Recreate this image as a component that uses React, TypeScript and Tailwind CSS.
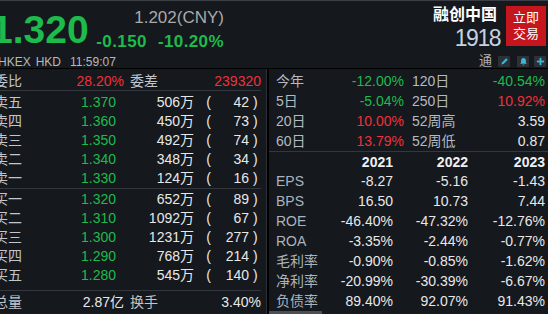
const GREEN = 'text-[#1dbb4b]';

type BookRow = [string, string, string, string];

const sells: BookRow[] = [
  ['卖五', '1.370', '506万', '42'],
  ['卖四', '1.360', '450万', '73'],
  ['卖三', '1.350', '492万', '74'],
  ['卖二', '1.340', '348万', '34'],
  ['卖一', '1.330', '124万', '16'],
];

const buys: BookRow[] = [
  ['买一', '1.320', '652万', '89'],
  ['买二', '1.310', '1092万', '67'],
  ['买三', '1.300', '1231万', '277'],
  ['买四', '1.290', '768万', '214'],
  ['买五', '1.280', '545万', '140'],
];

// [label, value, value colour, label, value, value colour]
const stats: [string, string, string, string, string, string][] = [
  ['今年', '-12.00%', 'text-[#1dbb4b]', '120日', '-40.54%', 'text-[#1dbb4b]'],
  ['5日', '-5.04%', 'text-[#1dbb4b]', '250日', '10.92%', 'text-[#f0303a]'],
  ['20日', '10.00%', 'text-[#f0303a]', '52周高', '3.59', 'text-[#e8e8e8]'],
  ['60日', '13.79%', 'text-[#f0303a]', '52周低', '0.87', 'text-[#e8e8e8]'],
];

const finance: [string, string, string, string][] = [
  ['EPS', '-8.27', '-5.16', '-1.43'],
  ['BPS', '16.50', '10.73', '7.44'],
  ['ROE', '-46.40%', '-47.32%', '-12.76%'],
  ['ROA', '-3.35%', '-2.44%', '-0.77%'],
  ['毛利率', '-0.90%', '-0.85%', '-1.62%'],
  ['净利率', '-20.99%', '-30.39%', '-6.67%'],
  ['负债率', '89.40%', '92.07%', '91.43%'],
];

function OrderRow({ row }: { row: BookRow }) {
  const [label, price, vol, count] = row;
  return (
    <div className="flex h-[19px] leading-[19px]">
      <span className="w-[50px] text-[#c2c5c9]">{label}</span>
      <span className={`w-[72px] text-right ${GREEN}`}>{price}</span>
      <span className="w-[78px] text-right text-[#e8e8e8]">{vol}</span>
      <span className="w-[17px] text-right text-[#e8e8e8]">(</span>
      <span className="w-[38px] text-right text-[#e8e8e8]">{count}</span>
      <span className="pl-[4px] text-[#e8e8e8]">)</span>
    </div>
  );
}

function ToolButton({ children, className }: { children: React.ReactNode; className?: string }) {
  return (
    <div className={`flex h-[11px] w-[12px] items-center justify-center rounded-[1px] bg-[#2d3137] ${className ?? ''}`}>
      {children}
    </div>
  );
}

export default function App() {
  return (
    <div className="h-[314px] w-[548px] overflow-hidden bg-[#15181d] font-['Liberation_Sans','Noto_Sans_CJK_SC',sans-serif]">
      {/* quote header */}
      <div className="flex h-[69px] border-t border-b border-t-[#3b3e44] border-b-black">
        <div className="flex flex-col">
          <div className="flex h-[55px]">
            <div className={`-ml-[9px] mt-[9px] w-[99px] text-[39px] font-bold leading-[40px] ${GREEN}`}>
              1.320
            </div>
            <div className="flex w-[134px] flex-col items-end">
              <div className="mt-[7px] text-[17px] leading-[20px] text-[#a9a9a9]">1.202(CNY)</div>
              <div className={`mt-[4px] flex gap-[11px] text-[17px] font-bold leading-[20px] tracking-[0.4px] ${GREEN}`}>
                <span>-0.150</span>
                <span>-10.20%</span>
              </div>
            </div>
          </div>
          <div className="flex h-[12px] text-[12px] leading-[12px] text-[#b9b9b9]">
            <span className="-ml-[2px]">HKEX</span>
            <span className="ml-[5px]">HKD</span>
            <span className="ml-[9px]">11:59:07</span>
          </div>
        </div>

        <div className="ml-auto flex flex-col items-end pr-[2px]">
          <div className="flex items-start">
            <div className="flex flex-col items-end">
              <div className="mt-[4px] pr-[3px] text-[16px] font-bold leading-[20px] text-white">融创中国</div>
              <div className="mt-[1px] text-[23px] leading-[24px] tracking-[-1.5px] text-[#c5d3e0]">1918</div>
            </div>
            <div className="ml-[6px] mt-[5px] flex h-[40px] w-[40px] flex-col items-center justify-center bg-[#c4161c] text-[13px] leading-[16px] text-white">
              <span>立即</span>
              <span>交易</span>
            </div>
          </div>
          <div className="mb-[1px] mt-auto flex h-[12px] items-center">
            <span className="text-[13px] leading-[12px] text-[#b0b0b0]">通</span>
            <ToolButton className="ml-[6px]">
              <svg width="9" height="9" viewBox="0 0 10 10">
                <polygon points="1.6,8.4 2.2,6.1 6.9,1.4 8.6,3.1 3.9,7.8" fill="#3bb7d8" />
              </svg>
            </ToolButton>
            <ToolButton className="ml-[7px]">
              <svg width="9" height="9" viewBox="0 0 10 10">
                <path d="M5 1C3.2 1 2.3 2.4 2.3 4v2.2L1.3 7.6h7.4L7.7 6.2V4C7.7 2.4 6.8 1 5 1z M4 8.2h2a1 1 0 0 1-2 0z" fill="#3bb7d8" />
              </svg>
            </ToolButton>
            <ToolButton className="ml-[5px]">
              <svg width="9" height="9" viewBox="0 0 10 10">
                <rect x="4" y="1" width="2" height="8" fill="#3bb7d8" />
                <rect x="1" y="4" width="8" height="2" fill="#3bb7d8" />
              </svg>
            </ToolButton>
          </div>
        </div>
      </div>

      <div className="flex h-[245px]">
        {/* order book */}
        <div className="w-[266px] overflow-hidden">
          <div className="-ml-[6px] w-[267px] text-[14px]">
            <div className="flex h-[21px] items-center pt-[4px]">
              <span className="w-[50px] text-[#c2c5c9]">委比</span>
              <span className="w-[80px] text-right text-[#f0303a]">28.20%</span>
              <span className="ml-[6px] text-[#c2c5c9]">委差</span>
              <span className="flex-1 text-right text-[#f0303a]">239320</span>
            </div>
            <div className="h-px bg-[#34373d]" />
            <div className="pt-[2px]">
              {sells.map((r) => (
                <OrderRow key={r[0]} row={r} />
              ))}
            </div>
            <div className="h-px bg-[#34373d]" />
            <div className="pb-[5px] pt-[1px]">
              {buys.map((r) => (
                <OrderRow key={r[0]} row={r} />
              ))}
            </div>
            <div className="h-px bg-[#34373d]" />
            <div className="mt-[2px] flex h-[19px] items-center">
              <span className="w-[50px] text-[#c2c5c9]">总量</span>
              <span className="w-[80px] text-right text-[#e8e8e8]">2.87亿</span>
              <span className="ml-[6px] text-[#c2c5c9]">换手</span>
              <span className="flex-1 text-right text-[#e8e8e8]">3.40%</span>
            </div>
          </div>
        </div>

        <div className="w-px bg-[#2c2f35]" />
        <div className="w-[2px] bg-black" />

        {/* performance and financials */}
        <div className="flex flex-1 flex-col text-[14px]">
          <div className="pt-[2px]">
            {stats.map(([l1, v1, c1, l2, v2, c2]) => (
              <div key={l1} className="flex h-[20px] items-center pl-[7px] pr-[3px]">
                <span className="w-[50px] text-[#b4bac1]">{l1}</span>
                <span className={`w-[78px] text-right ${c1}`}>{v1}</span>
                <span className="ml-[8px] text-[#b4bac1]">{l2}</span>
                <span className={`flex-1 text-right ${c2}`}>{v2}</span>
              </div>
            ))}
          </div>
          <div className="h-px bg-[#34373d]" />
          <div className="grid h-[19px] grid-cols-[50px_67px_75px_1fr] items-center pl-[7px] pr-[3px] font-bold text-[#f0f0f0]">
            <span />
            <span className="text-right">2021</span>
            <span className="text-right">2022</span>
            <span className="text-right">2023</span>
          </div>
          {finance.map(([label, a, b, c]) => (
            <div key={label} className="grid h-[20px] grid-cols-[50px_67px_75px_1fr] items-center pl-[7px] pr-[3px] text-[#e8e8e8]">
              <span className="text-[#aab4bf]">{label}</span>
              <span className="text-right">{a}</span>
              <span className="text-right">{b}</span>
              <span className="text-right">{c}</span>
            </div>
          ))}
          <div className="mt-auto h-[3px] w-[53px] bg-[#4b4e54]" />
        </div>
      </div>
    </div>
  );
}
